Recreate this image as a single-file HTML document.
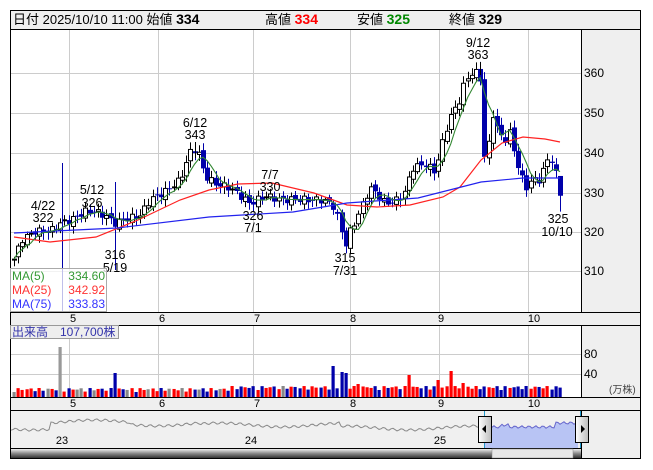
<!DOCTYPE html>
<html><head><meta charset="utf-8"><style>
body{margin:0;background:#fff;width:653px;height:470px;overflow:hidden;font-family:"Liberation Sans","Noto Sans CJK JP",sans-serif}
svg{position:absolute;left:0;top:0}
</style></head><body>
<svg id="s" width="653" height="470" xmlns="http://www.w3.org/2000/svg" font-family="Liberation Sans, Noto Sans CJK JP, sans-serif">
<rect x="10.5" y="10.5" width="630" height="448" fill="#fff" stroke="#000"/>
<rect x="11" y="11" width="629" height="18" fill="#efefef"/>
<line x1="10" y1="29.5" x2="641" y2="29.5" stroke="#000"/>
<rect x="582" y="30" width="58" height="282" fill="#efefef"/>
<line x1="581.5" y1="29" x2="581.5" y2="459" stroke="#000"/>
<rect x="11" y="312" width="629" height="13" fill="#efefef"/>
<line x1="10" y1="312.5" x2="641" y2="312.5" stroke="#000"/>
<line x1="10" y1="325.5" x2="641" y2="325.5" stroke="#000"/>
<rect x="582" y="326" width="58" height="71" fill="#efefef"/>
<rect x="11" y="397" width="629" height="13" fill="#efefef"/>
<line x1="10" y1="397.5" x2="641" y2="397.5" stroke="#000"/>
<line x1="10" y1="410.5" x2="641" y2="410.5" stroke="#000"/>
<rect x="11" y="411" width="570" height="37" fill="#f0f0f0"/>
<rect x="582" y="411" width="58" height="47" fill="#efefef"/>
<line x1="10" y1="448.5" x2="582" y2="448.5" stroke="#000"/>
<defs><linearGradient id="sg" x1="0" y1="0" x2="0" y2="1"><stop offset="0" stop-color="#eee"/><stop offset="0.5" stop-color="#888"/><stop offset="1" stop-color="#333"/></linearGradient>
<linearGradient id="hg" x1="0" y1="0" x2="1" y2="0"><stop offset="0" stop-color="#fff"/><stop offset="1" stop-color="#bbb"/></linearGradient></defs>
<rect x="11" y="449" width="570" height="9" fill="url(#sg)"/>
<rect x="492" y="449" width="81" height="9" fill="#e8e8e8" stroke="#888" stroke-width="0.5"/>
<g id="grid" stroke="#ccc" stroke-width="1"></g>
<g id="vol"></g>
<g id="nav"></g>
<g id="c"></g>
<g font-size="13" fill="#000">
<text x="13" y="24">日付 2025/10/10 11:00 始値 <tspan font-size="14" font-weight="bold">334</tspan></text>
<text x="265" y="24">高値 <tspan fill="#f00" font-size="14" font-weight="bold">334</tspan></text>
<text x="357" y="24">安値 <tspan fill="#080" font-size="14" font-weight="bold">325</tspan></text>
<text x="449" y="24">終値 <tspan font-size="14" font-weight="bold">329</tspan></text>
</g>
<g font-size="12" fill="#000">
<text x="584" y="77">360</text><text x="584" y="117">350</text><text x="584" y="157">340</text><text x="584" y="197">330</text><text x="584" y="236">320</text><text x="584" y="275">310</text>
<text x="584" y="358">80</text><text x="584" y="378">40</text><text x="609" y="393" font-size="10" fill="#444">(万株)</text>
</g>
<g font-size="11" fill="#000" text-anchor="middle">
<text x="73" y="322">5</text><text x="162" y="322">6</text><text x="257" y="322">7</text><text x="353" y="322">8</text><text x="441" y="322">9</text><text x="534" y="322">10</text>
<text x="73" y="407">5</text><text x="162" y="407">6</text><text x="257" y="407">7</text><text x="353" y="407">8</text><text x="441" y="407">9</text><text x="534" y="407">10</text>
<text x="62" y="444">23</text><text x="251" y="444">24</text><text x="440" y="444">25</text>
</g>
<g font-size="12.5" fill="#000" text-anchor="middle">
<text x="43" y="210">4/22</text><text x="43" y="222">322</text>
<text x="92" y="194">5/12</text><text x="92" y="207">326</text>
<text x="115" y="259">316</text><text x="115" y="272">5/19</text>
<text x="195" y="127">6/12</text><text x="195" y="139">343</text>
<text x="270" y="179">7/7</text><text x="270" y="191">330</text>
<text x="253" y="220">326</text><text x="253" y="232">7/1</text>
<text x="345" y="262">315</text><text x="345" y="275">7/31</text>
<text x="478" y="47">9/12</text><text x="478" y="59">363</text>
<text x="558" y="223">325</text><text x="557" y="236">10/10</text>
</g>
<rect x="10.5" y="268.5" width="96" height="43" fill="#fff" fill-opacity="0.75" stroke="#aaa"/>
<g font-size="12">
<text x="12" y="280" fill="#393">MA(5)</text><text x="105" y="280" fill="#393" text-anchor="end">334.60</text>
<text x="12" y="294" fill="#f33">MA(25)</text><text x="105" y="294" fill="#f33" text-anchor="end">342.92</text>
<text x="12" y="308" fill="#33f">MA(75)</text><text x="105" y="308" fill="#33f" text-anchor="end">333.83</text>
</g>
<rect x="10.5" y="325.5" width="108" height="13" fill="#eee" stroke="#999"/>
<text x="12" y="336" font-size="12" fill="#33a">出来高　107,700株</text>
</svg>
<script>
var NS="http://www.w3.org/2000/svg";
function el(p,t,a){var e=document.createElementNS(NS,t);for(var k in a)e.setAttribute(k,a[k]);document.getElementById(p).appendChild(e);return e;}
function Y(p){return 73+(360-p)*3.96;}
[73,113,153,193,232,271].forEach(function(y){el("grid","line",{x1:11,x2:581,y1:y+.5,y2:y+.5});});
[69,158,253,350,439,528].forEach(function(x){el("grid","line",{x1:x+.5,x2:x+.5,y1:30,y2:312});el("grid","line",{x1:x+.5,x2:x+.5,y1:326,y2:397});});
[354,374].forEach(function(y){el("grid","line",{x1:11,x2:581,y1:y+.5,y2:y+.5});});
var K=[[14,313],[22,318],[35,320],[50,320],[60,322],[72,323],[85,325],[95,325],[105,324],[115,322],[125,323],[140,324],[150,328],[165,330],[180,333],[190,340],[197,341],[205,334],[215,332],[230,331],[240,329],[250,327],[265,329],[280,328],[300,328],[320,328],[332,327],[340,322],[345,316],[350,320],[358,324],[366,329],[372,331],[385,327],[398,328],[405,330],[412,336],[425,337],[435,335],[445,345],[452,350],[458,352],[465,358],[472,360],[480,360],[483,338],[488,341],[493,350],[498,345],[505,343],[510,345],[516,338],[521,334],[526,331],[532,333],[540,333],[547,338],[553,338],[560,329]];
function P(x){for(var i=1;i<K.length;i++){if(x<=K[i][0]){var a=K[i-1],b=K[i];return a[1]+(b[1]-a[1])*(x-a[0])/(b[0]-a[0]);}}return K[K.length-1][1];}
var N=131,C=[],X=[];
for(var i=0;i<N;i++){var x=14+i*4.2;X.push(x);C.push(P(x)+Math.sin(i*2.3)*0.9);}
C[N-1]=329;
var ma=[];
for(i=0;i<N;i++){var s=0,n=0;for(var j=Math.max(0,i-4);j<=i;j++){s+=C[j];n++;}ma.push(s/n);}
var red=[[14,237],[50,242],[96,237],[138,220],[180,200],[209,190],[238,184],[272,183],[314,193],[347,205],[377,207],[410,205],[443,197],[460,187],[481,160],[502,143],[523,137],[545,139],[560,142]];
var blue=[[14,233],[117,228],[209,217],[293,212],[347,203],[418,198],[481,182],[523,178],[560,178]];
function pl(a){return a.map(function(p){return p.join(",")}).join(" ");}
for(i=0;i<N;i++){
 var o=i?C[i-1]+Math.sin(i*1.7)*0.6:313, c=C[i]; if(i==N-1)o=334;
 var hi=Math.max(o,c)+0.6+Math.abs(Math.sin(i*3.1))*1.2, lo=Math.min(o,c)-0.6-Math.abs(Math.cos(i*2.7))*1.2;
 if(i==N-1){hi=334;lo=325;}
 var x=Math.round(X[i])+.5;
 el("c","line",{x1:x,x2:x,y1:Y(hi),y2:Y(lo),stroke:c>=o?"#000":"#00a","stroke-width":1});
 var t=Y(Math.max(o,c)),h=Math.max(1,Math.abs(Y(o)-Y(c)));
 if(c>=o)el("c","rect",{x:x-2,y:t,width:4,height:h,fill:"#fff",stroke:"#000","stroke-width":1});
 else el("c","rect",{x:x-2.5,y:t,width:5,height:h,fill:"#00a"});
}
el("c","line",{x1:62.5,x2:62.5,y1:163,y2:312,stroke:"#00a"});
el("c","line",{x1:115.5,x2:115.5,y1:182,y2:270,stroke:"#00a"});
el("c","line",{x1:195.5,x2:195.5,y1:142,y2:158,stroke:"#000"});
el("c","line",{x1:480.5,x2:480.5,y1:62,y2:75,stroke:"#000"});
el("c","polyline",{points:pl(red),fill:"none",stroke:"#f22","stroke-width":1.2});
el("c","polyline",{points:pl(blue),fill:"none",stroke:"#22e","stroke-width":1.2});
el("c","polyline",{points:X.map(function(x,i){return x+","+Y(ma[i]).toFixed(1)}).join(" "),fill:"none",stroke:"#383","stroke-width":1.1});
var spikes={11:50,24:24,76:31,78:25,79:24,82:13,104:26,101:17,94:22,107:14};
for(i=0;i<N;i++){
 var c2=C[i],o2=i?C[i-1]:c2;
 var col=Math.abs(c2-o2)<0.3?"#888":(c2>o2?"#f00":"#00a");
 var h2=5+Math.abs(Math.sin(i*1.3))*4+(X[i]>230?2:0);
 if(spikes[i]){h2=spikes[i];} if(i==11)col="#999";
 el("vol","rect",{x:Math.round(X[i])-1.5,y:397-h2,width:3.2,height:h2,fill:col});
}
var pts=[];for(x=11;x<=480;x+=2){var v=428+Math.sin(x*0.05)*2+Math.sin(x*0.7)*1.2-(x>50&&x<130?6:0)-(x>130&&x<200?4:0)-(x>200&&x<340?3:0);pts.push(x+","+v.toFixed(1));}
el("nav","polyline",{points:pts.join(" "),fill:"none",stroke:"#888","stroke-width":1});
var bp=[];for(x=484;x<=578;x+=2){var v2=427-(x>555?4:0)+Math.sin(x*0.9)*1.2-(x>500&&x<510?2:0);bp.push(x+","+v2.toFixed(1));}
el("nav","polygon",{points:"484,448 "+bp.join(" ")+" 578,448",fill:"#b8c4f4",stroke:"none"});
el("nav","polyline",{points:bp.join(" "),fill:"none",stroke:"#66c","stroke-width":1});
el("nav","line",{x1:484.5,x2:484.5,y1:411,y2:448,stroke:"#29c"});
el("nav","line",{x1:580.5,x2:580.5,y1:411,y2:448,stroke:"#29c"});
el("nav","rect",{x:478.5,y:416.5,width:13,height:26,fill:"url(#hg)",stroke:"#000"});
el("nav","rect",{x:575.5,y:416.5,width:13,height:26,fill:"url(#hg)",stroke:"#000"});
el("nav","polygon",{points:"482,429 486,425 486,433",fill:"#000"});
el("nav","polygon",{points:"585,429 581,425 581,433",fill:"#000"});
</script>
</body></html>
